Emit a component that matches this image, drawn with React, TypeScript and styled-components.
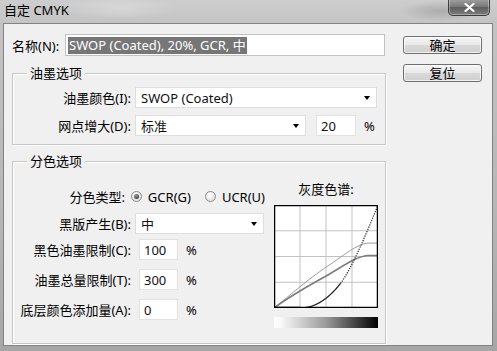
import React from "react";
import styled, { createGlobalStyle } from "styled-components";

const Global = createGlobalStyle`
  *, *::before, *::after { box-sizing: border-box; }
  html, body { margin: 0; padding: 0; background: #9a9a9a; }
  body {
    font-family: "Noto Sans", "Noto Sans CJK SC", sans-serif;
    font-size: 13px;
    color: #000;
  }
`;

const Window = styled.div`
  width: 497px;
  height: 351px;
  display: flex;
  flex-direction: column;
  overflow: hidden;
  background: linear-gradient(180deg, #cdcdcd 0%, #c2c2c2 8%, #b6b6b6 60%, #a6a6a6 100%);
`;

const TitleBar = styled.div`
  height: 23px;
  display: flex;
  align-items: flex-start;
  padding-left: 4px;
  background: radial-gradient(ellipse 40px 10px at 440px 11px, rgba(120, 120, 120, 0.35), transparent),
    radial-gradient(ellipse 60px 12px at 120px 8px, rgba(255, 255, 255, 0.25), transparent);
`;

const Title = styled.div`
  line-height: 20px;
  font-size: 13px;
`;

const CloseBtn = styled.div`
  margin-left: auto;
  margin-right: 7px;
  margin-top: -1px;
  width: 42px;
  height: 17px;
  border: 1px solid #3c3c3c;
  border-top: none;
  border-radius: 0 0 5px 5px;
  background: linear-gradient(180deg, #a2a2a2 0%, #787878 48%, #5e5e5e 52%, #7c7c7c 100%);
  box-shadow: inset 0 0 0 1px rgba(255, 255, 255, 0.35);
  display: flex;
  align-items: center;
  justify-content: center;
`;

const Client = styled.div`
  flex: 1;
  margin: 0 4px 5px 3px;
  border: 1px solid #828282;
  background: #f0f0f0;
  display: flex;
`;

const Main = styled.div`
  width: 382px;
  padding: 10px 0 0 8px;
  display: flex;
  flex-direction: column;
`;

const NameRow = styled.div`
  display: flex;
  align-items: center;
  height: 22px;
`;

const NameLabel = styled.span`
  width: 53px;
  white-space: nowrap;
`;

const NameInput = styled.div`
  width: 320px;
  height: 22px;
  background: #fff;
  border: 1px solid #c2c2c2;
  display: flex;
  align-items: center;
  padding-left: 2px;
`;

const Selected = styled.span`
  background: #767676;
  color: #fff;
  line-height: 17px;
  padding: 0 1px;
  white-space: nowrap;
`;

const Group = styled.div<{ $mt: number; $pad: string; $row?: boolean }>`
  position: relative;
  margin-top: ${(p) => p.$mt}px;
  padding: ${(p) => p.$pad};
  border: 1px solid #c6c6c6;
  box-shadow: inset 1px 1px 0 #fff, 1px 1px 0 #fff;
  display: flex;
  flex-direction: ${(p) => (p.$row ? "row" : "column")};
`;

const Legend = styled.span`
  position: absolute;
  top: -9px;
  left: 14px;
  padding: 0 3px;
  line-height: 17px;
  background: #f0f0f0;
`;

const Row = styled.div<{ $mt?: number }>`
  display: flex;
  align-items: center;
  height: 21px;
  margin-top: ${(p) => p.$mt ?? 0}px;
`;

const Label = styled.span`
  width: 118px;
  text-align: right;
  white-space: nowrap;
`;

const SelectBox = styled.div<{ $w: number; $ml?: number }>`
  width: ${(p) => p.$w}px;
  height: 21px;
  margin-left: ${(p) => p.$ml ?? 4}px;
  background: #fff;
  border: 1px solid #dedede;
  display: flex;
  align-items: center;
  padding-left: 5px;
  color: #111;
`;

const Arrow = styled.span`
  margin-left: auto;
  margin-right: 6px;
  width: 0;
  height: 0;
  border-left: 3.5px solid transparent;
  border-right: 3.5px solid transparent;
  border-top: 4px solid #000;
`;

const TextBox = styled.div<{ $w: number; $ml: number }>`
  width: ${(p) => p.$w}px;
  height: 21px;
  margin-left: ${(p) => p.$ml}px;
  background: #fff;
  border: 1px solid #e2e2e2;
  display: flex;
  align-items: center;
  padding-left: 4px;
  color: #111;
`;

const Percent = styled.span`
  margin-left: 8px;
`;

const RadioOpt = styled.span<{ $ml: number }>`
  display: flex;
  align-items: center;
  gap: 6px;
  margin-left: ${(p) => p.$ml}px;
`;

const RadioDot = styled.span<{ $on?: boolean }>`
  width: 11px;
  height: 11px;
  border-radius: 50%;
  border: 1px solid #8a8a8a;
  background: radial-gradient(circle at 40% 35%, #ffffff, #d6d6d6);
  display: flex;
  align-items: center;
  justify-content: center;
  &::after {
    content: "";
    display: ${(p) => (p.$on ? "block" : "none")};
    width: 5px;
    height: 5px;
    border-radius: 50%;
    background: radial-gradient(circle at 40% 35%, #9a9a9a, #222);
  }
`;

const LeftCol = styled.div`
  width: 252px;
  display: flex;
  flex-direction: column;
`;

const GraphCol = styled.div`
  width: 104px;
  margin-left: 9px;
  margin-top: -5px;
  display: flex;
  flex-direction: column;
`;

const GraphTitle = styled.div`
  line-height: 17px;
  text-align: center;
`;

const GraphSvg = styled.svg`
  display: block;
  margin-top: 7px;
  width: 104px;
  height: 103px;
  background: #fff;
`;

const GrayBar = styled.div`
  margin-top: 9px;
  width: 104px;
  height: 11px;
  background: linear-gradient(90deg, #fff 0%, #fafafa 6%, #9a9a9a 50%, #000 100%);
`;

const ButtonCol = styled.div`
  margin-left: 17px;
  padding-top: 12px;
  display: flex;
  flex-direction: column;
  gap: 10px;
`;

const Button = styled.div`
  width: 79px;
  height: 18px;
  border: 1px solid #6f6f6f;
  border-radius: 3px;
  background: linear-gradient(180deg, #f6f6f6 0%, #e8e8e8 48%, #d9d9d9 52%, #cfcfcf 100%);
  box-shadow: inset 0 0 0 1px rgba(255, 255, 255, 0.7);
  display: flex;
  align-items: center;
  justify-content: center;
  line-height: 16px;
`;

function Graph() {
  const grid = [25, 50, 75];
  return (
    <GraphSvg viewBox="0 0 100 100" preserveAspectRatio="none">
      {grid.map((g) => (
        <React.Fragment key={g}>
          <line x1={g} y1={0} x2={g} y2={100} stroke="#c2c2c2" strokeWidth={1} vectorEffect="non-scaling-stroke" />
          <line x1={0} y1={g} x2={100} y2={g} stroke="#c2c2c2" strokeWidth={1} vectorEffect="non-scaling-stroke" />
        </React.Fragment>
      ))}
      <path
        d="M0,100 C15,88 35,70 55,57 C68,48 80,38 90,37 L100,37"
        fill="none"
        stroke="#9c9c9c"
        strokeWidth={1}
        vectorEffect="non-scaling-stroke"
      />
      <path
        d="M0,100 C20,85 40,75 55,66 C70,57 80,50 90,49 L100,49"
        fill="none"
        stroke="#7c7c7c"
        strokeWidth={1.6}
        vectorEffect="non-scaling-stroke"
      />
      <path d="M0,100 L25,100" stroke="#111" strokeWidth={2.5} vectorEffect="non-scaling-stroke" />
      <path
        d="M25,100 C42,100 54,89 64,76"
        fill="none"
        stroke="#222"
        strokeWidth={1.3}
        vectorEffect="non-scaling-stroke"
      />
      <path
        d="M64,76 C74,63 88,30 100,0"
        fill="none"
        stroke="#222"
        strokeWidth={1.2}
        strokeDasharray="1.2 1.2"
        vectorEffect="non-scaling-stroke"
      />
      <rect x={0} y={0} width={100} height={100} fill="none" stroke="#000" strokeWidth={2.5} vectorEffect="non-scaling-stroke" />
    </GraphSvg>
  );
}

export default function App() {
  return (
    <>
      <Global />
      <Window>
        <TitleBar>
          <Title>自定 CMYK</Title>
          <CloseBtn>
            <svg width="11" height="9" viewBox="0 0 11 9">
              <path d="M1.5 1 L9.5 8 M9.5 1 L1.5 8" stroke="#fff" strokeWidth={2.2} strokeLinecap="round" />
            </svg>
          </CloseBtn>
        </TitleBar>
        <Client>
          <Main>
            <NameRow>
              <NameLabel>名称(N):</NameLabel>
              <NameInput>
                <Selected>SWOP (Coated), 20%, GCR, 中</Selected>
              </NameInput>
            </NameRow>

            <Group $mt={17} $pad="13px 0 8px 0">
              <Legend>油墨选项</Legend>
              <Row>
                <Label>油墨颜色(I):</Label>
                <SelectBox $w={242}>
                  SWOP (Coated)
                  <Arrow />
                </SelectBox>
              </Row>
              <Row $mt={7}>
                <Label>网点增大(D):</Label>
                <SelectBox $w={171}>
                  标准
                  <Arrow />
                </SelectBox>
                <TextBox $w={40} $ml={10}>20</TextBox>
                <Percent>%</Percent>
              </Row>
            </Group>

            <Group $mt={16} $pad="24px 0 15px 0" $row>
              <Legend>分色选项</Legend>
              <LeftCol>
                <Row>
                  <Label>分色类型:</Label>
                  <RadioOpt $ml={6}>
                    <RadioDot $on />
                    GCR(G)
                  </RadioOpt>
                  <RadioOpt $ml={14}>
                    <RadioDot />
                    UCR(U)
                  </RadioOpt>
                </Row>
                <Row $mt={6}>
                  <Label>黑版产生(B):</Label>
                  <SelectBox $w={129}>
                    中
                    <Arrow />
                  </SelectBox>
                </Row>
                <Row $mt={5}>
                  <Label>黑色油墨限制(C):</Label>
                  <TextBox $w={39} $ml={8}>100</TextBox>
                  <Percent>%</Percent>
                </Row>
                <Row $mt={9}>
                  <Label>油墨总量限制(T):</Label>
                  <TextBox $w={39} $ml={8}>300</TextBox>
                  <Percent>%</Percent>
                </Row>
                <Row $mt={9}>
                  <Label>底层颜色添加量(A):</Label>
                  <TextBox $w={39} $ml={8}>0</TextBox>
                  <Percent>%</Percent>
                </Row>
              </LeftCol>
              <GraphCol>
                <GraphTitle>灰度色谱:</GraphTitle>
                <Graph />
                <GrayBar />
              </GraphCol>
            </Group>
          </Main>

          <ButtonCol>
            <Button>确定</Button>
            <Button>复位</Button>
          </ButtonCol>
        </Client>
      </Window>
    </>
  );
}
